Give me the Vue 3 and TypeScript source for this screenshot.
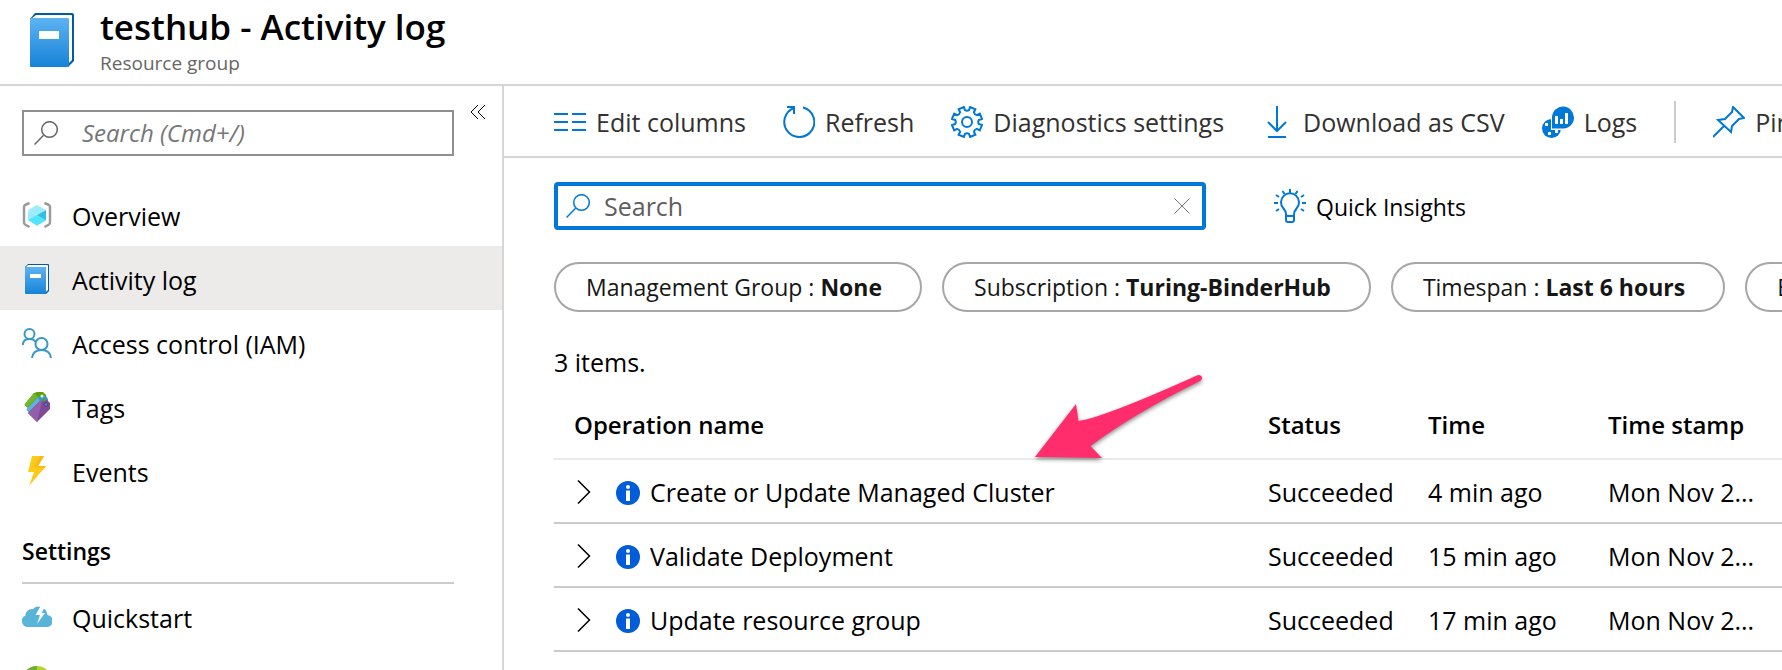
<script setup lang="ts">
import { ref } from 'vue'

interface NavItem {
  label: string
  icon: string
  active?: boolean
}

interface LogRow {
  name: string
  status: string
  time: string
  stamp: string
}

const navItems: NavItem[] = [
  { label: 'Overview', icon: 'cube' },
  { label: 'Activity log', icon: 'book', active: true },
  { label: 'Access control (IAM)', icon: 'people' },
  { label: 'Tags', icon: 'tags' },
  { label: 'Events', icon: 'bolt' },
]

const pills = [
  { name: 'Management Group', value: 'None' },
  { name: 'Subscription', value: 'Turing-BinderHub' },
  { name: 'Timespan', value: 'Last 6 hours' },
  { name: 'Event severity', value: 'All' },
]

const rows: LogRow[] = [
  { name: 'Create or Update Managed Cluster', status: 'Succeeded', time: '4 min ago', stamp: 'Mon Nov 2...' },
  { name: 'Validate Deployment', status: 'Succeeded', time: '15 min ago', stamp: 'Mon Nov 2...' },
  { name: 'Update resource group', status: 'Succeeded', time: '17 min ago', stamp: 'Mon Nov 2...' },
]

const menuQuery = ref('')
const logQuery = ref('')

// Outline of an eight-toothed gear centred in a 32x32 box.
function gearPath(): string {
  const teeth = 8
  const step = (Math.PI * 2) / teeth
  const at = (r: number, a: number) => `${(16 + r * Math.cos(a)).toFixed(2)} ${(16 + r * Math.sin(a)).toFixed(2)}`
  let d = ''
  for (let i = 0; i < teeth; i++) {
    const a = i * step + step / 2
    d += `${i ? 'L' : 'M'}${at(12, a - 0.22)}L${at(15.3, a - 0.19)}L${at(15.3, a + 0.19)}L${at(12, a + 0.22)}`
    d += `Q${at(10.6, a + step / 2)} ${at(12, a + step - 0.22)}`
  }
  return d + 'Z'
}
const gear = gearPath()
</script>

<template>
  <div class="page">
    <header class="head">
      <svg class="head-icon" viewBox="0 0 44 54" aria-hidden="true">
        <defs>
          <linearGradient id="bookFill" x1="0" y1="0" x2="0" y2="1">
            <stop offset="0" stop-color="#5db3f2" />
            <stop offset="1" stop-color="#1683d8" />
          </linearGradient>
        </defs>
        <path d="M5 0H42Q44 0 44 2V48L38 54H3L0 6Z" fill="#005ba1" />
        <path d="M6 2H41Q42 2 42 3V47L38 51V5H2Z" fill="#fff" />
        <rect y="5" width="39" height="49" rx="1" fill="url(#bookFill)" />
        <rect x="9" y="18" width="20" height="8" fill="#fff" />
      </svg>
      <div>
        <h1>testhub - Activity log</h1>
        <p>Resource group</p>
      </div>
    </header>

    <div class="body">
      <aside class="side">
        <div class="side-top">
          <label class="menu-search">
            <svg viewBox="0 0 24 24" stroke-width="1.5" aria-hidden="true">
              <circle cx="15.5" cy="8.5" r="7.800" />
              <path d="M9.6 14.2L0.5 23.5" />
            </svg>
            <input v-model="menuQuery" type="text" placeholder="Search (Cmd+/)" aria-label="Search menu" />
          </label>
          <button class="collapse" type="button" aria-label="Collapse menu">
            <svg viewBox="0 0 16 16" aria-hidden="true"><path d="M8 1L1 8L8 15M15 1L8 8L15 15" /></svg>
          </button>
        </div>

        <nav class="nav">
          <a v-for="item in navItems" :key="item.label" href="#" :class="{ active: item.active }">
            <svg v-if="item.icon === 'cube'" viewBox="0 0 30 30" aria-hidden="true">
              <path d="M7.500 3L3 5Q2 5.500 2 7V22Q2 24 3 24.500L7.500 27M22.500 3L27 5Q28 5.500 28 7V22Q28 24 27 24.500L22.500 27" fill="none" stroke="#9b9b9b" stroke-width="2.500" />
              <path d="M15 5L24 10L15 15L6 10Z" fill="#9cebff" />
              <path d="M6 10L15 15V25.500L6 20Z" fill="#9cebff" />
              <path d="M24 10L15 15V25.500L24 20Z" fill="#32bedd" />
              <path d="M15 15L6 20L15 25.500L24 20Z" fill="#50e6ff" />
            </svg>
            <svg v-else-if="item.icon === 'book'" viewBox="0 0 30 30" aria-hidden="true">
              <path d="M6 0H26Q27 0 27 1V27L24 30H4L3 3Z" fill="#005ba1" />
              <path d="M6 1H25Q26 1 26 2V26L24 28V3H4Z" fill="#fff" />
              <rect x="3" y="3" width="21" height="27" rx="1" fill="url(#bookFill)" />
              <rect x="8" y="10" width="11" height="4" fill="#fff" />
            </svg>
            <svg v-else-if="item.icon === 'people'" viewBox="0 0 30 30" aria-hidden="true">
              <g fill="none" stroke="#3999c6" stroke-width="2">
                <circle cx="7.500" cy="6" r="5" />
                <path d="M0.800 17Q1 11 7.500 11Q12 11 13.500 14" />
                <circle cx="19.500" cy="16" r="6" />
                <path d="M10 30Q11 22 19.500 22Q28 22 29 30" />
              </g>
            </svg>
            <svg v-else-if="item.icon === 'tags'" viewBox="0 0 30 30" aria-hidden="true">
              <path d="M12 1L15 0H21L24 3V7L8 18L2.500 13Z" fill="#57a300" />
              <path d="M12 1L2.500 12L5 15L16 5Z" fill="#76b52f" />
              <path d="M16 5L19 4H24L26 7V12L10 23L4.500 18Z" fill="#3999c6" />
              <path d="M16 5L4.500 17L7 20L18 10Z" fill="#5fb1da" />
              <circle cx="20" cy="4" r="1.500" fill="#fff" />
              <path d="M18 9L25 8L28 11V17L15 30L6 21Z" fill="#804998" />
              <path d="M18 9H20L15 30L6 21Z" fill="#925fa9" />
              <circle cx="22" cy="8" r="1.500" fill="#57a300" />
              <circle cx="24" cy="12.500" r="1.800" fill="#3999c6" stroke="#59308a" />
            </svg>
            <svg v-else viewBox="0 0 30 30" aria-hidden="true">
              <path d="M10 0H22L16 10H24L7 30L12 16H6Z" fill="#fccb19" />
              <path d="M18 0H22L16 10H24L19 16L21 11.500H12Z" fill="#fdb813" />
            </svg>
            <span>{{ item.label }}</span>
          </a>
        </nav>

        <h2>Settings</h2>
        <nav class="nav">
          <a href="#">
            <svg viewBox="0 0 30 30" aria-hidden="true">
              <path d="M6 25A6 6 0 0 1 3.500 13.500A6.500 6.500 0 0 1 11 7A8 8 0 0 1 19 5Q25 7 25.500 13A6 6 0 0 1 24 25Z" fill="#59b4d9" />
              <path d="M19 3.500L13.500 13H18L15 22L23 11H19.500L23.500 4Z" fill="#fff" />
            </svg>
            <span>Quickstart</span>
          </a>
          <a href="#" aria-label="Resource costs">
            <svg viewBox="0 0 30 30" aria-hidden="true">
              <circle cx="15" cy="15" r="15" fill="#b8d432" />
              <path d="M15 0A15 15 0 0 0 15 30Z" fill="#6bb12e" />
            </svg>
          </a>
        </nav>
      </aside>

      <main class="main">
        <div class="toolbar">
          <button type="button">
            <svg viewBox="0 0 32 32" aria-hidden="true"><path d="M0 8H14M18 8H32M0 16H14M18 16H32M0 24H14M18 24H32" /></svg>
            Edit columns
          </button>
          <button type="button">
            <svg viewBox="0 0 32 32" aria-hidden="true">
              <path d="M20 1.500A15 15 0 1 1 11 2" /><path d="M4 1H11V8" />
            </svg>
            Refresh
          </button>
          <button type="button">
            <svg viewBox="0 0 32 32" aria-hidden="true"><path :d="gear" /><circle cx="16" cy="16" r="5" /></svg>
            Diagnostics settings
          </button>
          <button type="button">
            <svg viewBox="0 0 32 32" aria-hidden="true"><path d="M16 0V25M7 16L16 25L25 16M7 31H25" /></svg>
            Download as CSV
          </button>
          <button type="button">
            <svg viewBox="0 0 32 32" aria-hidden="true">
              <g stroke="none">
                <circle cx="9.500" cy="22.500" r="9.500" fill="#0078d7" />
                <path d="M3 17H6V20H3ZM13 24H16V27H13ZM6 26H9V29H6Z" fill="#fff" />
                <path d="M9 24V11A11.500 11.500 0 1 1 20.500 24Z" fill="#fff" />
                <path d="M10 22.500V11A11 11 0 1 1 21 22.500Z" fill="#0078d7" />
                <path d="M13 10H16V18H13ZM18 13H21V18H18ZM23 7H26V18H23Z" fill="#fff" />
              </g>
            </svg>
            Logs
          </button>
          <span class="divider"></span>
          <button type="button">
            <svg viewBox="0 0 32 32" aria-hidden="true">
              <path d="M20 1L31 12L26 13L19 20L18 26L5 14L12 13L19 6ZM11 20L0 31" />
            </svg>
            Pin current filters
          </button>
        </div>

        <section class="content">
          <div class="filters">
            <label class="log-search">
              <svg viewBox="0 0 24 24" stroke-width="1.5" aria-hidden="true">
                <circle cx="15.500" cy="8.500" r="7.800" />
                <path d="M9.600 14.200L0.500 23.500" />
              </svg>
              <input v-model="logQuery" type="text" placeholder="Search" aria-label="Search operations" />
              <button type="button" aria-label="Clear search" @click="logQuery = ''">
                <svg viewBox="0 0 16 16" aria-hidden="true"><path d="M0.500 0.500L15.500 15.500M15.500 0.500L0.500 15.500" /></svg>
              </button>
            </label>
            <button class="insights" type="button">
              <svg viewBox="0 0 32 34" aria-hidden="true">
                <path d="M12 27V25Q12 22.500 9.500 19.500A9 9 0 1 1 22.500 19.500Q20 22.500 20 25V27M12 27H20V31Q20 33 18 33H14Q12 33 12 31Z" />
                <path d="M16 0V4M8.500 2L10.500 5M23.500 2L21.500 5M2 6L5 8M30 6L27 8M0 14H4M28 14H32M2 22L5 20M30 22L27 20" />
              </svg>
              <span>Quick Insights</span>
            </button>
          </div>

          <div class="pills">
            <button v-for="p in pills" :key="p.name" type="button">
              {{ p.name }} : <b>{{ p.value }}</b>
            </button>
          </div>

          <p class="count">3 items.</p>

          <div class="table-wrap">
            <table>
              <colgroup>
                <col />
                <col class="c-status" />
                <col class="c-time" />
                <col class="c-stamp" />
              </colgroup>
              <thead>
                <tr>
                  <th>Operation name</th>
                  <th>Status</th>
                  <th>Time</th>
                  <th>Time stamp</th>
                </tr>
              </thead>
              <tbody>
                <tr v-for="r in rows" :key="r.name">
                  <td>
                    <div class="op">
                      <button type="button" :aria-label="'Expand ' + r.name">
                        <svg viewBox="0 0 14 24" stroke-width="1.5" aria-hidden="true"><path d="M1 0.500L12.500 12L1 23.500" /></svg>
                      </button>
                      <svg class="info" viewBox="0 0 24 24" aria-hidden="true">
                        <circle cx="12" cy="12" r="12" fill="#015cda" />
                        <circle cx="12" cy="6" r="2" fill="#fff" />
                        <rect x="10" y="9.500" width="4" height="10.500" fill="#fff" />
                      </svg>
                      <span>{{ r.name }}</span>
                    </div>
                  </td>
                  <td>{{ r.status }}</td>
                  <td>{{ r.time }}</td>
                  <td>{{ r.stamp }}</td>
                </tr>
              </tbody>
            </table>
            <svg class="arrow" viewBox="0 0 168 84" aria-hidden="true">
              <path d="M0 82L41 29L43.500 46Q70 42 163 0Q167 0 167 3Q167 5 165 6Q100 38 55.500 71L67 83Z" />
            </svg>
          </div>
        </section>
      </main>
    </div>
  </div>
</template>

<style>
body {
  margin: 0;
  background: #fff;
}
</style>

<style scoped>
.page {
  min-height: 100vh;
  display: flex;
  flex-direction: column;
  overflow: hidden;
  color: #000;
  font-family: "Open Sans", "Noto Sans", sans-serif;
  font-size: 25px;
  line-height: 34px;
}
.page * {
  box-sizing: border-box;
}
h1,
h2,
p {
  margin: 0;
}
button {
  padding: 0;
  border: 0;
  background: none;
  color: inherit;
  font: inherit;
  white-space: nowrap;
  cursor: pointer;
}
svg {
  display: block;
  flex: none;
}
input {
  flex: 1;
  min-width: 0;
  padding: 0;
  border: 0;
  outline: 0;
  background: none;
  color: inherit;
  font: inherit;
}
.head {
  display: flex;
  gap: 26px;
  height: 86px;
  padding: 4px 30px 0;
  border-bottom: 2px solid #d6d6d6;
}
.head-icon {
  width: 44px;
  height: 54px;
  margin-top: 9px;
}
h1 {
  font-size: 35px;
  font-weight: 600;
  line-height: 46px;
}
.head p {
  color: #666;
  font-size: 19px;
  line-height: 26px;
}
.body {
  flex: 1;
  display: flex;
}
.side {
  flex: none;
  width: 504px;
  height: 584px;
  overflow: hidden;
  border-right: 2px solid #d6d6d6;
}
.side-top {
  display: flex;
  gap: 16px;
  padding: 24px 0 26px 22px;
}
.menu-search {
  display: flex;
  align-items: center;
  gap: 24px;
  width: 432px;
  height: 46px;
  padding: 0 10px;
  border: 2px solid #8f8f8f;
}
.menu-search svg {
  width: 24px;
  height: 24px;
  fill: none;
  stroke: #666;
}
.menu-search input {
  font-size: 24px;
}
.menu-search input::placeholder {
  color: #767676;
  font-style: italic;
  opacity: 1;
}
.collapse {
  align-self: flex-start;
  margin-top: -6px;
}
.collapse svg {
  width: 16px;
  height: 16px;
  fill: none;
  stroke: #000;
}
.nav a {
  display: flex;
  align-items: center;
  gap: 20px;
  height: 64px;
  padding: 2px 22px 0;
  color: #000;
  text-decoration: none;
}
.nav a.active {
  background: #edebe9;
}
.nav span,
.insights span {
  padding-top: 2px;
}
.nav svg {
  width: 30px;
  height: 30px;
}
h2 {
  margin: 30px 48px 0 22px;
  padding: 3px 0 15px;
  border-bottom: 2px solid #ccc;
  font-size: 23px;
  font-weight: 600;
  line-height: 32px;
}
.main {
  flex: 1;
  min-width: 0;
  overflow: hidden;
}
.toolbar {
  display: flex;
  align-items: center;
  gap: 37px;
  height: 72px;
  padding: 2px 0 0 50px;
  border-bottom: 2px solid #d6d6d6;
  color: #323130;
}
.toolbar button {
  display: flex;
  align-items: center;
  gap: 10px;
}
.toolbar svg,
.insights svg {
  width: 32px;
  height: 32px;
  fill: none;
  stroke: #0078d7;
  stroke-width: 2;
}
.divider {
  flex: none;
  width: 2px;
  height: 42px;
  background: #ccc;
}
.content {
  padding: 24px 0 0 50px;
}
.filters {
  display: flex;
  align-items: center;
  gap: 68px;
}
.log-search {
  display: flex;
  align-items: center;
  gap: 14px;
  width: 652px;
  height: 48px;
  padding: 0 12px 0 8px;
  border: 4px solid #0078d7;
  border-radius: 4px;
}
.log-search svg {
  width: 24px;
  height: 24px;
  fill: none;
  stroke: #0078d7;
}
.log-search input::placeholder {
  color: #605e5c;
  opacity: 1;
}
.log-search button svg {
  width: 16px;
  height: 16px;
  stroke: #777;
}
.insights {
  display: flex;
  align-items: center;
  gap: 10px;
  font-size: 23px;
}
.insights svg {
  height: 34px;
}
.pills {
  display: flex;
  gap: 20px;
  margin-top: 32px;
}
.pills button {
  flex: none;
  height: 50px;
  padding: 0 38px 0 30px;
  border: 2px solid #a6a6a6;
  border-radius: 25px;
  color: #161616;
  font-size: 23px;
}
.count {
  margin-top: 33px;
}
.table-wrap {
  position: relative;
  margin-top: 11px;
}
table {
  width: 100%;
  border-collapse: separate;
  border-spacing: 0;
  table-layout: fixed;
}
.c-status {
  width: 160px;
}
.c-time {
  width: 180px;
}
.c-stamp {
  width: 174px;
}
th,
td {
  height: 64px;
  padding: 2px 0 0;
  border-bottom: 2px solid #ccc;
  text-align: left;
  white-space: nowrap;
}
th {
  height: 70px;
  border-color: #eaeaea;
  font-size: 24px;
  font-weight: 600;
}
th:first-child {
  padding-left: 20px;
}
.op {
  display: flex;
  align-items: center;
  padding-left: 23px;
}
.op button svg {
  width: 14px;
  height: 24px;
  fill: none;
  stroke: #000;
}
.info {
  width: 24px;
  height: 24px;
  margin: 2px 10px 0 25px;
}
.arrow {
  position: absolute;
  top: -15px;
  left: 481px;
  width: 168px;
  height: 84px;
  overflow: visible;
  fill: #ff2d6c;
  filter: drop-shadow(0 2px 2px rgba(0, 0, 0, 0.45));
}
</style>
